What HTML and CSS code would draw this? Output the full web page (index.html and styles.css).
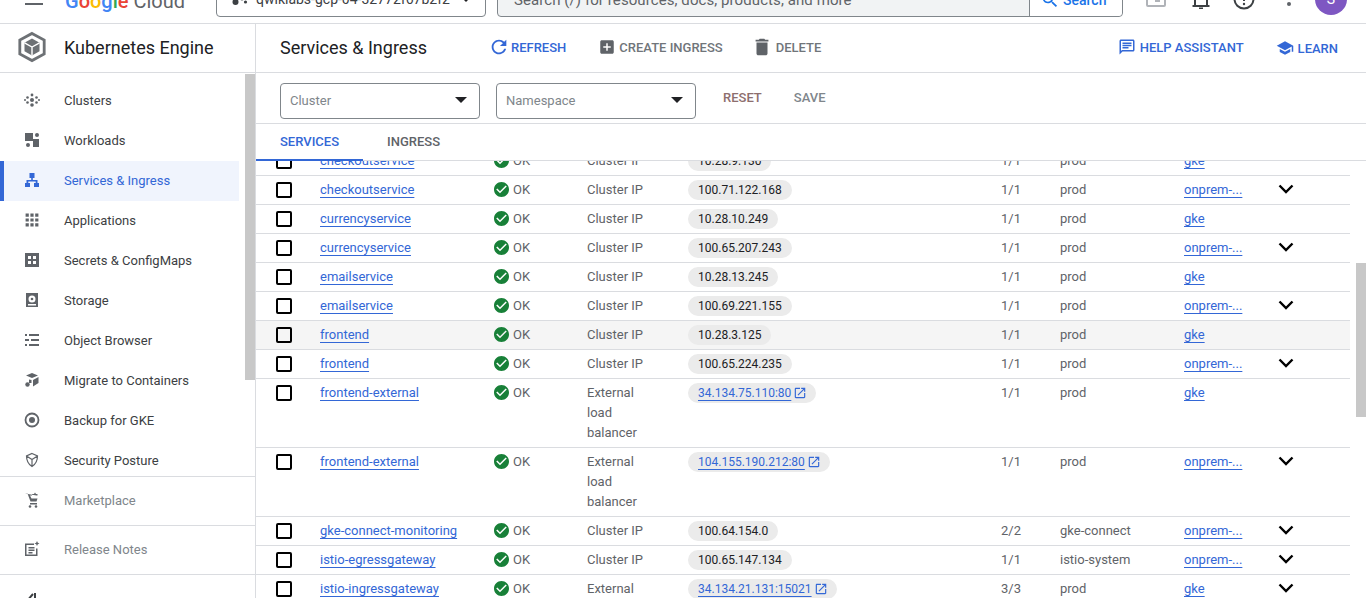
FILE: index.html
```html
<!DOCTYPE html>
<html lang="en">
<head>
    <title>Services &amp; Ingress</title>
    <link rel="stylesheet" href="styles.css">
</head>
<body>
    <header class="topbar">
        <div class="topbar_inner">
            <span class="hamburger"></span>
            <span class="logo"><b class="g_blue">G</b><b class="g_red">o</b><b class="g_yellow">o</b><b class="g_blue">g</b><b class="g_green">l</b><b class="g_red">e</b> <span class="logo_cloud">Cloud</span></span>
            <div class="project">
                <svg class="project_icon" viewBox="0 0 16 16"><circle cx="3.5" cy="11" r="3"/><circle cx="10" cy="7" r="2.4"/><circle cx="13.5" cy="11" r="1.6"/></svg>
                <span class="project_name">qwiklabs-gcp-04-32772f67b2f2</span>
                <span class="arrow project_arrow"></span>
            </div>
            <div class="search">
                <span class="search_text">Search (/) for resources, docs, products, and more</span>
                <span class="search_btn">
                    <svg class="search_icon" viewBox="0 0 24 24"><path d="M15.5 14h-.79l-.28-.27C15.41 12.59 16 11.11 16 9.5 16 5.91 13.09 3 9.5 3S3 5.91 3 9.5 5.91 16 9.5 16c1.61 0 3.09-.59 4.23-1.57l.27.28v.79l5 4.99L20.49 19l-4.99-5zm-6 0C7.01 14 5 11.99 5 9.5S7.01 5 9.5 5 14 7.01 14 9.5 11.99 14 9.5 14z"/></svg>
                    Search
                </span>
            </div>
            <svg class="top_icon icon_terminal" viewBox="0 0 20 20"><rect x="1" y="2" width="18" height="15" rx="1"/><path d="M5 4l3 3-3 3M9 12h5"/></svg>
            <svg class="top_icon icon_bell" viewBox="0 0 20 20"><path d="M4 17V8c0-3 2-5 6-5s6 2 6 5v9M1.500 17h17M8 19.500h4"/></svg>
            <svg class="top_icon icon_help" viewBox="0 0 22 22"><circle cx="11" cy="11" r="9.500"/><path d="M11 10v3"/><circle class="dot" cx="11" cy="16" r="1.200"/></svg>
            <svg class="icon_dots" viewBox="0 0 6 24"><circle cx="3" cy="6" r="2"/><circle cx="3" cy="12" r="2"/><circle cx="3" cy="18" r="2"/></svg>
            <span class="avatar">S</span>
        </div>
    </header>

    <div class="page">
        <aside class="sidebar">
            <div class="side_title">
                <svg class="kube_icon" viewBox="0 0 32 34"><path class="kube_hex" d="M16 2.5L29 9.5V24.5L16 31.5L3 24.5V9.5Z"/><path class="kube_cube" d="M16 8L24 12.5V21.5L16 26L8 21.5V12.5Z"/><path class="kube_line" d="M8 12.5L16 17L24 12.5M16 17V26"/></svg>
                <span>Kubernetes Engine</span>
            </div>
            <nav class="side_nav">
                <a class="nav_item"><svg class="nav_icon" viewBox="0 0 16 16"><circle cx="8" cy="8" r="2"/><circle cx="8" cy="3" r="1.4"/><circle cx="8" cy="13" r="1.8"/><circle cx="3.5" cy="5.5" r="1.3"/><circle cx="12.5" cy="5.5" r="1.3"/><circle cx="3.5" cy="10.5" r="1.3"/><circle cx="12.5" cy="10.5" r="1.3"/><circle cx="1" cy="8" r="1"/><circle cx="15" cy="8" r="1"/></svg>Clusters</a>
                <a class="nav_item"><svg class="nav_icon" viewBox="0 0 16 16"><rect x="1" y="1" width="8" height="8"/><circle cx="13" cy="3" r="2"/><circle cx="4" cy="13" r="2"/><rect x="9" y="7" width="6" height="8"/></svg>Workloads</a>
                <a class="nav_item nav_active"><svg class="nav_icon" viewBox="0 0 16 16"><path d="M5.500 1h5v5h-1.700v2h4.700v3h1.500v4h-5v-4h1.700v-1.500h-7.400v1.500h1.700v4h-5v-4h1.500v-3h4.700v-2h-1.700z"/></svg>Services &amp; Ingress</a>
                <a class="nav_item"><svg class="nav_icon" viewBox="2 2 20 20"><path d="M4 8h4V4H4v4zm6 12h4v-4h-4v4zm-6 0h4v-4H4v4zm0-6h4v-4H4v4zm6 0h4v-4h-4v4zm6-10v4h4V4h-4zm-6 4h4V4h-4v4zm6 6h4v-4h-4v4zm0 6h4v-4h-4v4z"/></svg>Applications</a>
                <a class="nav_item"><svg class="nav_icon" viewBox="0 0 16 16"><path fill-rule="evenodd" d="M1 1h14v14H1zM4 4v3h3V4zM9 4v3h3V4zM4 9v3h3V9zM9 9v3h3V9z"/></svg>Secrets &amp; ConfigMaps</a>
                <a class="nav_item"><svg class="nav_icon" viewBox="0 0 16 16"><path fill-rule="evenodd" d="M2 1h12v14H2zM8 3.500a3.500 3.500 0 1 0 0 7a3.500 3.500 0 1 0 0-7zM4 12v1.500h8V12z"/><circle cx="8" cy="7" r="1.300"/></svg>Storage</a>
                <a class="nav_item"><svg class="nav_icon" viewBox="0 0 16 16"><path d="M5 2h10v2H5zM1 2h2v2H1zM7 7h8v2H7zM1 7h4v2H1zM5 12h10v2H5zM1 12h2v2H1z"/></svg>Object Browser</a>
                <a class="nav_item"><svg class="nav_icon" viewBox="0 0 16 16"><path d="M8 1l6 2.500-6 2.500-6-2.500zM14.500 5v6l-5.500 3.500v-6.500zM7.500 8v3h-2.500v-3.500z"/><circle cx="3.500" cy="12.500" r="2.200"/></svg>Migrate to Containers</a>
                <a class="nav_item"><svg class="nav_icon" viewBox="0 0 16 16"><circle class="nav_ring" cx="8" cy="8" r="6.500"/><circle cx="8" cy="8" r="3"/></svg>Backup for GKE</a>
                <a class="nav_item"><svg class="nav_icon nav_line" viewBox="0 0 16 16"><path d="M8 1.500l5.500 2.500c0 5-1.500 8-5.500 10.500-4-2.500-5.500-5.500-5.500-10.500zM2.500 4l5.500 3.500 5.500-3.500M8 7.500v7"/></svg>Security Posture</a>
            </nav>
            <a class="side_foot"><svg class="nav_icon" viewBox="0 0 16 16"><path d="M1 1.500h2.500l3 8h6l1-3h-6l-1.500-3h2v-1.500h2l1-1.500 1 1.500h1.500v1.500h-1zM6 11h7v1.500h-7z"/><circle cx="6" cy="14.500" r="1.300"/><circle cx="12" cy="14.500" r="1.300"/></svg>Marketplace</a>
            <a class="side_foot"><svg class="nav_icon" viewBox="0 0 16 16"><path fill-rule="evenodd" d="M1 2.500h9v1.500h-7.500v9.500h9.500v-6h1.500v7.500h-12.500z"/><path d="M4.500 6h6v1.500h-6zM4.500 8.500h6v1.500h-6zM4.500 11h4v1.500h-4zM13 0l.8 1.700 1.700.8-1.700.8-.8 1.700-.8-1.700-1.700-.8 1.700-.8z"/></svg>Release Notes</a>
            <div class="collapse_row"><svg class="collapse_icon" viewBox="0 0 16 16"><path d="M11 0v16M9 1L3 8l6 7"/></svg></div>
            <span class="side_scroll"></span>
        </aside>

        <main class="content">
            <div class="toolbar">
                <h1 class="page_title">Services &amp; Ingress</h1>
                <a class="tool tool_blue tool_refresh"><svg class="tool_icon" viewBox="0 0 24 24"><path d="M17.65 6.350C16.200 4.900 14.210 4 12 4c-4.420 0-7.990 3.580-7.990 8s3.570 8 7.990 8c3.730 0 6.840-2.550 7.730-6h-2.080c-.82 2.330-3.040 4-5.650 4-3.310 0-6-2.690-6-6s2.690-6 6-6c1.660 0 3.140.69 4.220 1.780L13 11h7V4l-2.350 2.350z"/></svg>REFRESH</a>
                <a class="tool tool_create"><svg class="tool_icon" viewBox="0 0 24 24"><path d="M19 3H5c-1.110 0-2 .9-2 2v14c0 1.100.89 2 2 2h14c1.100 0 2-.9 2-2V5c0-1.100-.9-2-2-2zm-2 10h-4v4h-2v-4H7v-2h4V7h2v4h4v2z"/></svg>CREATE INGRESS</a>
                <a class="tool tool_delete"><svg class="tool_icon" viewBox="0 0 24 24"><path d="M6 19c0 1.100.9 2 2 2h8c1.100 0 2-.9 2-2V7H6v12zM19 4h-3.500l-1-1h-5l-1 1H5v2h14V4z"/></svg>DELETE</a>
                <a class="tool tool_blue tool_help"><svg class="tool_icon" viewBox="0 0 24 24"><path d="M20 2H4c-1.100 0-2 .9-2 2v18l4-4h14c1.100 0 2-.9 2-2V4c0-1.100-.9-2-2-2zm0 14H5.170L4 17.170V4h16v12z"/><path d="M6 12h8v2H6zm0-3h12v2H6zm0-3h12v2H6z"/></svg>HELP ASSISTANT</a>
                <a class="tool tool_blue tool_learn"><svg class="tool_icon" viewBox="0 0 24 24"><path d="M5 13.180v4L12 21l7-3.820v-4L12 17l-7-3.820zM12 3L1 9l11 6 9-4.910V17h2V9L12 3z"/></svg>LEARN</a>
            </div>

            <div class="filters">
                <div class="select">Cluster<span class="arrow"></span></div>
                <div class="select">Namespace<span class="arrow"></span></div>
                <a class="filter_btn filter_reset">RESET</a>
                <a class="filter_btn">SAVE</a>
            </div>

            <div class="tabs">
                <a class="tab tab_active">SERVICES</a>
                <a class="tab">INGRESS</a>
            </div>

            <div class="table_wrap">
                <table class="services">
                    <colgroup>
                        <col class="c_check"><col class="c_name"><col class="c_status"><col class="c_type"><col class="c_ip"><col class="c_pods"><col class="c_ns"><col class="c_cluster"><col class="c_more">
                    </colgroup>
                    <tr><td><span class="box"></span></td><td><a class="lnk">checkoutservice</a></td><td><svg class="ok" viewBox="2 2 20 20"><use href="#ok_path"/></svg>OK</td><td>Cluster IP</td><td><span class="chip">10.28.9.130</span></td><td>1/1</td><td>prod</td><td><a class="lnk">gke</a></td><td></td></tr>
                    <tr><td><span class="box"></span></td><td><a class="lnk">checkoutservice</a></td><td><svg class="ok" viewBox="2 2 20 20"><use href="#ok_path"/></svg>OK</td><td>Cluster IP</td><td><span class="chip">100.71.122.168</span></td><td>1/1</td><td>prod</td><td><a class="lnk">onprem-...</a></td><td><svg class="chev" viewBox="0 0 16 10"><use href="#chev_path"/></svg></td></tr>
                    <tr><td><span class="box"></span></td><td><a class="lnk">currencyservice</a></td><td><svg class="ok" viewBox="2 2 20 20"><use href="#ok_path"/></svg>OK</td><td>Cluster IP</td><td><span class="chip">10.28.10.249</span></td><td>1/1</td><td>prod</td><td><a class="lnk">gke</a></td><td></td></tr>
                    <tr><td><span class="box"></span></td><td><a class="lnk">currencyservice</a></td><td><svg class="ok" viewBox="2 2 20 20"><use href="#ok_path"/></svg>OK</td><td>Cluster IP</td><td><span class="chip">100.65.207.243</span></td><td>1/1</td><td>prod</td><td><a class="lnk">onprem-...</a></td><td><svg class="chev" viewBox="0 0 16 10"><use href="#chev_path"/></svg></td></tr>
                    <tr><td><span class="box"></span></td><td><a class="lnk">emailservice</a></td><td><svg class="ok" viewBox="2 2 20 20"><use href="#ok_path"/></svg>OK</td><td>Cluster IP</td><td><span class="chip">10.28.13.245</span></td><td>1/1</td><td>prod</td><td><a class="lnk">gke</a></td><td></td></tr>
                    <tr><td><span class="box"></span></td><td><a class="lnk">emailservice</a></td><td><svg class="ok" viewBox="2 2 20 20"><use href="#ok_path"/></svg>OK</td><td>Cluster IP</td><td><span class="chip">100.69.221.155</span></td><td>1/1</td><td>prod</td><td><a class="lnk">onprem-...</a></td><td><svg class="chev" viewBox="0 0 16 10"><use href="#chev_path"/></svg></td></tr>
                    <tr class="row_hover"><td><span class="box"></span></td><td><a class="lnk">frontend</a></td><td><svg class="ok" viewBox="2 2 20 20"><use href="#ok_path"/></svg>OK</td><td>Cluster IP</td><td><span class="chip">10.28.3.125</span></td><td>1/1</td><td>prod</td><td><a class="lnk">gke</a></td><td></td></tr>
                    <tr><td><span class="box"></span></td><td><a class="lnk">frontend</a></td><td><svg class="ok" viewBox="2 2 20 20"><use href="#ok_path"/></svg>OK</td><td>Cluster IP</td><td><span class="chip">100.65.224.235</span></td><td>1/1</td><td>prod</td><td><a class="lnk">onprem-...</a></td><td><svg class="chev" viewBox="0 0 16 10"><use href="#chev_path"/></svg></td></tr>
                    <tr><td><span class="box"></span></td><td><a class="lnk">frontend-external</a></td><td><svg class="ok" viewBox="2 2 20 20"><use href="#ok_path"/></svg>OK</td><td class="type_wrap">External load balancer</td><td><span class="chip"><a class="lnk">34.134.75.110:80</a><svg class="ext" viewBox="0 0 24 24"><use href="#ext_path"/></svg></span></td><td>1/1</td><td>prod</td><td><a class="lnk">gke</a></td><td></td></tr>
                    <tr><td><span class="box"></span></td><td><a class="lnk">frontend-external</a></td><td><svg class="ok" viewBox="2 2 20 20"><use href="#ok_path"/></svg>OK</td><td class="type_wrap">External load balancer</td><td><span class="chip"><a class="lnk">104.155.190.212:80</a><svg class="ext" viewBox="0 0 24 24"><use href="#ext_path"/></svg></span></td><td>1/1</td><td>prod</td><td><a class="lnk">onprem-...</a></td><td><svg class="chev" viewBox="0 0 16 10"><use href="#chev_path"/></svg></td></tr>
                    <tr><td><span class="box"></span></td><td><a class="lnk">gke-connect-monitoring</a></td><td><svg class="ok" viewBox="2 2 20 20"><use href="#ok_path"/></svg>OK</td><td>Cluster IP</td><td><span class="chip">100.64.154.0</span></td><td>2/2</td><td>gke-connect</td><td><a class="lnk">onprem-...</a></td><td><svg class="chev" viewBox="0 0 16 10"><use href="#chev_path"/></svg></td></tr>
                    <tr><td><span class="box"></span></td><td><a class="lnk">istio-egressgateway</a></td><td><svg class="ok" viewBox="2 2 20 20"><use href="#ok_path"/></svg>OK</td><td>Cluster IP</td><td><span class="chip">100.65.147.134</span></td><td>1/1</td><td>istio-system</td><td><a class="lnk">onprem-...</a></td><td><svg class="chev" viewBox="0 0 16 10"><use href="#chev_path"/></svg></td></tr>
                    <tr><td><span class="box"></span></td><td><a class="lnk">istio-ingressgateway</a></td><td><svg class="ok" viewBox="2 2 20 20"><use href="#ok_path"/></svg>OK</td><td class="type_wrap">External load balancer</td><td><span class="chip"><a class="lnk">34.134.21.131:15021</a><svg class="ext" viewBox="0 0 24 24"><use href="#ext_path"/></svg></span></td><td>3/3</td><td>prod</td><td><a class="lnk">gke</a></td><td><svg class="chev" viewBox="0 0 16 10"><use href="#chev_path"/></svg></td></tr>
                </table>
            </div>
            <span class="main_scroll"></span>
        </main>
    </div>

    <!-- shared icon shapes -->
    <svg class="sprite">
        <path id="ok_path" fill-rule="evenodd" d="M12 2C6.480 2 2 6.480 2 12s4.480 10 10 10 10-4.480 10-10S17.520 2 12 2zm-2 15l-5-5 1.410-1.410L10 14.170l7.590-7.590L19 8l-9 9z"/>
        <polyline id="chev_path" points="1.500,1.500 8,8 14.500,1.500"/>
        <path id="ext_path" d="M19 19H5V5h7V3H5c-1.110 0-2 .9-2 2v14c0 1.100.89 2 2 2h14c1.100 0 2-.9 2-2v-7h-2v7zM14 3v2h3.590l-9.830 9.830 1.410 1.410L19 6.410V10h2V3h-7z"/>
    </svg>
</body>
</html>
```

FILE: styles.css
```css
* {
    box-sizing: border-box;
}
html, body {
    margin: 0;
    height: 598px;
    overflow: hidden;
}
body {
    display: flex;
    flex-direction: column;
    background: #ffffff;
    color: #5f6368;
    font-family: Roboto, "Liberation Sans", sans-serif;
    font-size: 13px;
}
a {
    color: inherit;
}
.sprite {
    display: none;
}

/* Top bar, scrolled almost out of the window */
.topbar {
    flex: none;
    height: 24px;
    border-bottom: 1px solid #dadce0;
    overflow: hidden;
}
.topbar_inner {
    display: flex;
    align-items: center;
    height: 48px;
    margin-top: -25px;
    padding-left: 25px;
}
.hamburger {
    width: 18px;
    height: 2px;
    margin-top: 9px;
    background: #5f6368;
}
.logo {
    width: 151px;
    margin: 3px 0 0 22px;
    font-size: 20px;
    line-height: 28px;
    white-space: nowrap;
}
.logo b {
    font-weight: 500;
}
.logo_cloud {
    color: #5f6368;
}
.g_blue { color: #4285f4; }
.g_red { color: #ea4335; }
.g_yellow { color: #fbbc04; }
.g_green { color: #34a853; }
.project {
    display: flex;
    align-items: center;
    flex: none;
    width: 270px;
    height: 36px;
    padding-left: 15px;
    border: 1px solid #80868b;
    border-radius: 4px;
    color: #3c4043;
    font-size: 14px;
}
.project_icon {
    width: 16px;
    height: 16px;
    fill: #3c4043;
}
.project_name {
    margin-left: 8px;
}
.project_arrow {
    margin-left: 10px;
    border-left-width: 5px;
    border-right-width: 5px;
    border-top-width: 5px;
    border-top-color: #3c4043;
}
.search {
    display: flex;
    flex: none;
    width: 626px;
    height: 36px;
    margin-left: 11px;
    border: 1px solid #80868b;
    border-radius: 4px;
    background: #f1f3f4;
    font-size: 15px;
    line-height: 36px;
}
.search_text {
    flex: 1;
    padding-left: 16px;
    color: #5f6368;
    letter-spacing: .08px;
}
.search_btn {
    display: flex;
    align-items: center;
    gap: 3px;
    width: 93px;
    padding: 2px 0 0 10px;
    border-left: 1px solid #80868b;
    border-radius: 0 4px 4px 0;
    background: #ffffff;
    color: #1a73e8;
    font-size: 14px;
    font-weight: 500;
}
.search_icon {
    width: 20px;
    height: 20px;
    fill: #1a73e8;
}
.top_icon {
    flex: none;
    fill: none;
    stroke-width: 2;
    stroke: #5f6368;
}
.icon_terminal {
    width: 20px;
    height: 20px;
    margin: 0 0 0 23px;
    stroke: #b0b3b8;
}
.icon_bell {
    width: 20px;
    height: 20px;
    margin-left: 25px;
    stroke: #3c4043;
}
.icon_help {
    width: 22px;
    height: 22px;
    margin-left: 22px;
    stroke: #3c4043;
}
.icon_help .dot {
    fill: #3c4043;
    stroke: none;
}
.icon_dots {
    flex: none;
    width: 6px;
    height: 24px;
    margin: -2px 0 0 31px;
    fill: #5f6368;
}
.avatar {
    flex: none;
    width: 32px;
    height: 32px;
    margin-left: 23px;
    border-radius: 50%;
    background: #7e57c2;
    color: #ffffff;
    font-size: 14px;
    line-height: 32px;
    text-align: center;
}

.page {
    flex: 1;
    display: flex;
    min-height: 0;
}

/* Left navigation */
.sidebar {
    position: relative;
    flex: none;
    display: flex;
    flex-direction: column;
    width: 256px;
    border-right: 1px solid #dadce0;
    overflow: hidden;
}
.side_title {
    flex: none;
    display: flex;
    align-items: center;
    height: 49px;
    padding: 0 0 2px 17px;
    border-bottom: 1px solid #dadce0;
    color: #202124;
    font-size: 18px;
}
.side_title span {
    margin-left: 17px;
}
.kube_icon {
    width: 30px;
    height: 34px;
}
.kube_hex {
    fill: none;
    stroke: #6d7175;
    stroke-width: 3;
}
.kube_cube {
    fill: #6d7175;
}
.kube_line {
    fill: none;
    stroke: #ffffff;
    stroke-width: 1.5;
}
.side_nav {
    flex: none;
    height: 404px;
    padding-top: 8px;
    overflow: hidden;
    border-bottom: 1px solid #dadce0;
}
.nav_item, .side_foot {
    display: flex;
    align-items: center;
    width: 239px;
    height: 40px;
    padding: 0 0 2px 24px;
    color: #3c4043;
}
.nav_icon {
    flex: none;
    width: 16px;
    height: 16px;
    margin-right: 24px;
    fill: #5f6368;
}
.nav_line {
    fill: none;
    stroke: #5f6368;
    stroke-width: 1.2;
}
.nav_ring {
    fill: none;
    stroke: #5f6368;
    stroke-width: 1.8;
}
.nav_active {
    padding-left: 20px;
    border-left: 4px solid #3367d6;
    background: #f0f4fd;
    color: #3367d6;
}
.nav_active .nav_icon {
    fill: #3367d6;
}
.side_foot {
    flex: none;
    width: 100%;
    height: 49px;
    border-bottom: 1px solid #dadce0;
    color: #80868b;
}
.collapse_row {
    flex: none;
    padding: 18px 0 0 24px;
}
.collapse_icon {
    width: 16px;
    height: 16px;
    fill: none;
    stroke: #3c4043;
    stroke-width: 2;
}
.side_scroll {
    position: absolute;
    top: 50px;
    left: 245px;
    width: 10px;
    height: 306px;
    background: #c8c8c8;
}

/* Main area */
.content {
    position: relative;
    flex: 1;
    display: flex;
    flex-direction: column;
    min-width: 0;
}
.toolbar {
    flex: none;
    display: flex;
    align-items: center;
    height: 49px;
    padding: 0 0 2px 24px;
    border-bottom: 1px solid #dadce0;
}
.page_title {
    width: 208px;
    margin: 0;
    color: #202124;
    font-size: 18px;
    font-weight: 400;
}
.tool {
    display: flex;
    align-items: center;
    margin-right: 32px;
    color: #70757a;
    font-size: 13px;
    font-weight: 500;
    white-space: nowrap;
}
.tool_blue {
    color: #3367d6;
}
.tool_icon {
    width: 18px;
    height: 18px;
    margin-right: 3px;
    fill: #5f6368;
}
.tool_blue .tool_icon {
    fill: #3367d6;
}
.tool_refresh .tool_icon {
    width: 22px;
    height: 22px;
    margin-right: 1px;
}
.tool_create {
    margin-right: 28px;
}
.tool_delete .tool_icon {
    width: 22px;
    height: 22px;
    margin-right: 3px;
}
.tool_help {
    margin-left: auto;
}
.tool_help .tool_icon, .tool_learn .tool_icon {
    margin-right: 4px;
}
.tool_learn {
    margin: 2px 28px 0 0;
}
.filters {
    flex: none;
    display: flex;
    align-items: flex-start;
    height: 51px;
    padding: 10px 0 0 24px;
    border-bottom: 1px solid #dadce0;
}
.select {
    display: flex;
    align-items: center;
    justify-content: space-between;
    width: 200px;
    height: 36px;
    margin-right: 16px;
    padding: 0 12px 2px 9px;
    border: 1px solid #80868b;
    border-radius: 4px;
    color: #80868b;
}
.arrow {
    display: inline-block;
    width: 0;
    height: 0;
    border-left: 6px solid transparent;
    border-right: 6px solid transparent;
    border-top: 6px solid #202124;
}
.filter_btn {
    margin: 7px 21px 0 11px;
    color: #80868b;
    font-size: 13px;
    font-weight: 500;
}
.filter_reset {
    color: #8d6e6e;
}
.tabs {
    flex: none;
    display: flex;
    height: 37px;
    border-bottom: 1px solid #dadce0;
}
.tab {
    height: 37px;
    padding: 10px 24px 0;
    color: #5f6368;
    font-size: 13px;
    font-weight: 500;
}
.tab_active {
    border-bottom: 2px solid #3367d6;
    color: #3367d6;
}

/* Services table */
.table_wrap {
    flex: 1;
    min-height: 0;
    overflow: hidden;
}
.services {
    width: 1094px;
    margin-top: -14px;
    border-collapse: separate;
    border-spacing: 0;
    table-layout: fixed;
}
.services td {
    padding: 4px 0;
    border-bottom: 1px solid #dadce0;
    line-height: 20px;
    vertical-align: top;
}
.row_hover td {
    background: #f5f5f5;
}
.c_check { width: 64px; }
.c_name { width: 174px; }
.c_status { width: 93px; }
.c_type { width: 101px; }
.c_ip { width: 313px; }
.c_pods { width: 59px; }
.c_ns { width: 124px; }
.c_cluster { width: 95px; }
.c_more { width: 71px; }
.services .type_wrap {
    padding-right: 30px;
}
.box {
    display: block;
    width: 16px;
    height: 16px;
    margin: 2px 0 0 20px;
    border: 2px solid #000000;
    border-radius: 2px;
}
.lnk {
    color: #3367d6;
    text-decoration: underline;
    text-decoration-skip-ink: none;
    text-underline-offset: 3px;
}
.ok {
    width: 15px;
    height: 15px;
    margin-right: 4px;
    vertical-align: -3px;
    fill: #188038;
}
.chip {
    display: inline-flex;
    align-items: center;
    height: 20px;
    padding: 0 10px;
    border-radius: 10px;
    background: #ebebeb;
    color: #202124;
    font-size: 12px;
}
.ext {
    width: 14px;
    height: 14px;
    margin-left: 2px;
    margin-right: -1px;
    fill: #3367d6;
}
.chev {
    display: block;
    width: 16px;
    height: 10px;
    margin: 4px 0 0 -1px;
    fill: none;
    stroke: #000000;
    stroke-width: 2.4;
}
.main_scroll {
    position: absolute;
    top: 239px;
    right: 0;
    width: 10px;
    height: 154px;
    background: #c8c8c8;
}
```
